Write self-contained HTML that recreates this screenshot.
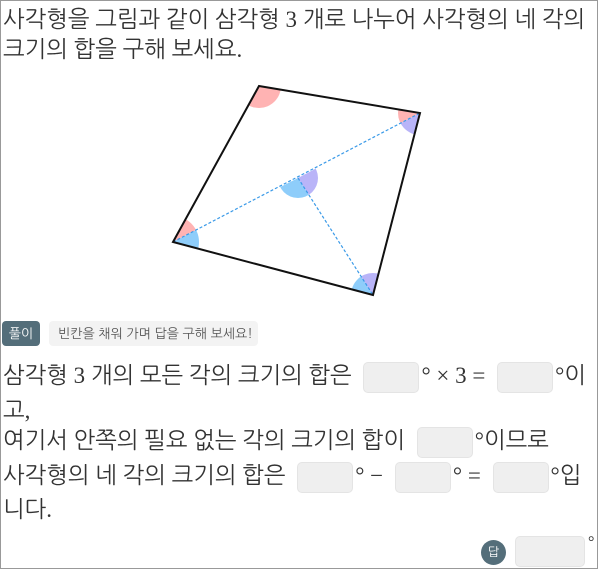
<!DOCTYPE html>
<html><head><meta charset="utf-8"><style>
body{margin:0;width:598px;height:569px;overflow:hidden;background:#fff;position:relative;font-family:"Liberation Serif","NanumGothic","Noto Sans CJK KR",sans-serif;color:#333}
.frame{position:absolute;left:0;top:0;width:596px;height:567px;border:1px solid #999}
.t{position:absolute;left:3px;font-size:23px;white-space:nowrap;line-height:26px}
.b{display:inline-block;width:54px;height:29px;background:#efefef;border:1px solid #e4e4e4;border-radius:5px;vertical-align:middle;margin:0 2px 0 6px}
.tag{position:absolute;left:2px;top:321px;width:38px;height:25px;background:#546e7a;color:#fff;border-radius:4px;font-size:13px;text-align:center;line-height:25px;font-family:"NanumGothic","Noto Sans CJK KR",sans-serif}
.hint{position:absolute;left:49px;top:321px;width:200px;height:25px;background:#f3f3f3;border-radius:4px;font-size:13px;color:#555;line-height:25px;padding-left:9px;white-space:nowrap;overflow:hidden;font-family:"NanumGothic","Noto Sans CJK KR",sans-serif}
</style></head><body>
<div class="frame"></div>
<div class="t" style="top:7px">사각형을 그림과 같이 삼각형 3 개로 나누어 사각형의 네 각의</div>
<div class="t" style="top:37px">크기의 합을 구해 보세요.</div>
<svg style="position:absolute;left:0;top:0" width="598" height="310">
<defs>
<clipPath id="c1"><polygon points="173,242 259,86 420,113"/></clipPath>
<clipPath id="c2"><polygon points="173,242 298,178 373,295"/></clipPath>
<clipPath id="c3"><polygon points="298,178 420,113 373,295"/></clipPath>
</defs>
<g clip-path="url(#c1)" fill="#ffb3b3"><circle cx="173" cy="242" r="26"/><circle cx="259" cy="86" r="22"/><circle cx="420" cy="113" r="22"/></g>
<g clip-path="url(#c2)" fill="#8ecdfa"><circle cx="173" cy="242" r="26"/><circle cx="298" cy="178" r="20"/><circle cx="373" cy="295" r="22"/></g>
<g clip-path="url(#c3)" fill="#b9b4f8"><circle cx="420" cy="113" r="22"/><circle cx="298" cy="178" r="20"/><circle cx="373" cy="295" r="22"/></g>
<line x1="173" y1="242" x2="420" y2="113" stroke="#3a9ae8" stroke-width="1.2" stroke-dasharray="3,2"/>
<line x1="298" y1="178" x2="373" y2="295" stroke="#3a9ae8" stroke-width="1.2" stroke-dasharray="3,2"/>
<polygon points="259,86 420,113 373,295 173,242" fill="none" stroke="#111" stroke-width="2"/>
</svg>
<div class="tag">풀이</div>
<div class="hint">빈칸을 채워 가며 답을 구해 보세요!</div>
<div class="t" style="top:362px">삼각형 3 개의 모든 각의 크기의 합은 <span class="b"></span>° × 3 = <span class="b"></span>°이</div>
<div class="t" style="top:398px">고,</div>
<div class="t" style="top:427px">여기서 안쪽의 필요 없는 각의 크기의 합이 <span class="b"></span>°이므로</div>
<div class="t" style="top:462px">사각형의 네 각의 크기의 합은 <span class="b"></span>° − <span class="b"></span>° = <span class="b"></span>°입</div>
<div class="t" style="top:497px">니다.</div>
<div style="position:absolute;left:481px;top:540px;width:25px;height:25px;border-radius:50%;background:#546e7a;color:#fff;font-size:12px;text-align:center;line-height:25px;font-family:'NanumGothic',sans-serif">답</div>
<div style="position:absolute;left:515px;top:536px;width:68px;height:29px;background:#efefef;border:1px solid #e4e4e4;border-radius:5px"></div>
<div style="position:absolute;left:588px;top:534px;font-size:16px">°</div>
</body></html>
